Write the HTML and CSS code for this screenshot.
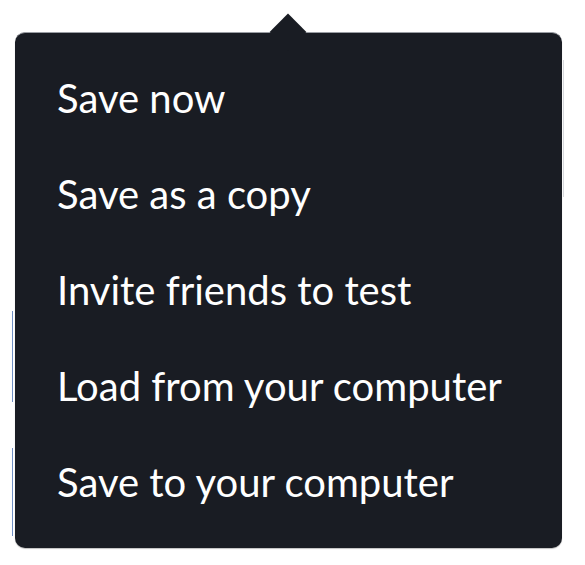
FILE: index.html
```html
<!DOCTYPE html>
<html>
<head>
<meta charset="utf-8">
<link rel="stylesheet" href="styles.css">
</head>
<body>
<div class="stage">
  <span class="ghost ghost-right"></span>
  <span class="ghost ghost-left-a"></span>
  <span class="ghost ghost-left-b"></span>
  <div class="menu">
    <span class="arrow"></span>
    <ul class="items">
      <li class="item">Save now</li>
      <li class="item">Save as a copy</li>
      <li class="item">Invite friends to test</li>
      <li class="item">Load from your computer</li>
      <li class="item">Save to your computer</li>
    </ul>
  </div>
</div>
</body>
</html>
```

FILE: styles.css
```css
html, body {
  margin: 0;
  padding: 0;
  background: #ffffff;
}

.stage {
  position: relative;
  width: 585px;
  height: 565px;
  padding: 32px 0 0 15px;
  box-sizing: border-box;
}

.menu {
  position: relative;
  width: 547px;
  height: 516px;
  background: #191c23;
  border-radius: 10px;
  border-top: 1px solid #9a9da3;
  box-sizing: border-box;
  box-shadow: 0 1px 1px rgba(0,0,0,0.25);
}

.arrow {
  position: absolute;
  left: 260px;
  top: -14px;
  width: 26px;
  height: 26px;
  background: #191c23;
  transform: rotate(45deg);
}

.items {
  position: relative;
  list-style: none;
  margin: 0;
  padding: 17px 0 18px 0;
  display: flex;
  flex-direction: column;
}

.item {
  padding: 20px 42px;
  font-family: "Lato", "Open Sans", sans-serif;
  font-size: 40px;
  line-height: 56px;
  color: #ffffff;
  white-space: nowrap;
}

.ghost {
  position: absolute;
  width: 1px;
}

.ghost-right {
  left: 563px;
  top: 60px;
  height: 137px;
  background: #d6d8dc;
}

.ghost-left-a {
  left: 12px;
  top: 311px;
  height: 91px;
  background: #6f8fc4;
}

.ghost-left-b {
  left: 12px;
  top: 448px;
  height: 88px;
  background: #6f8fc4;
}
```
